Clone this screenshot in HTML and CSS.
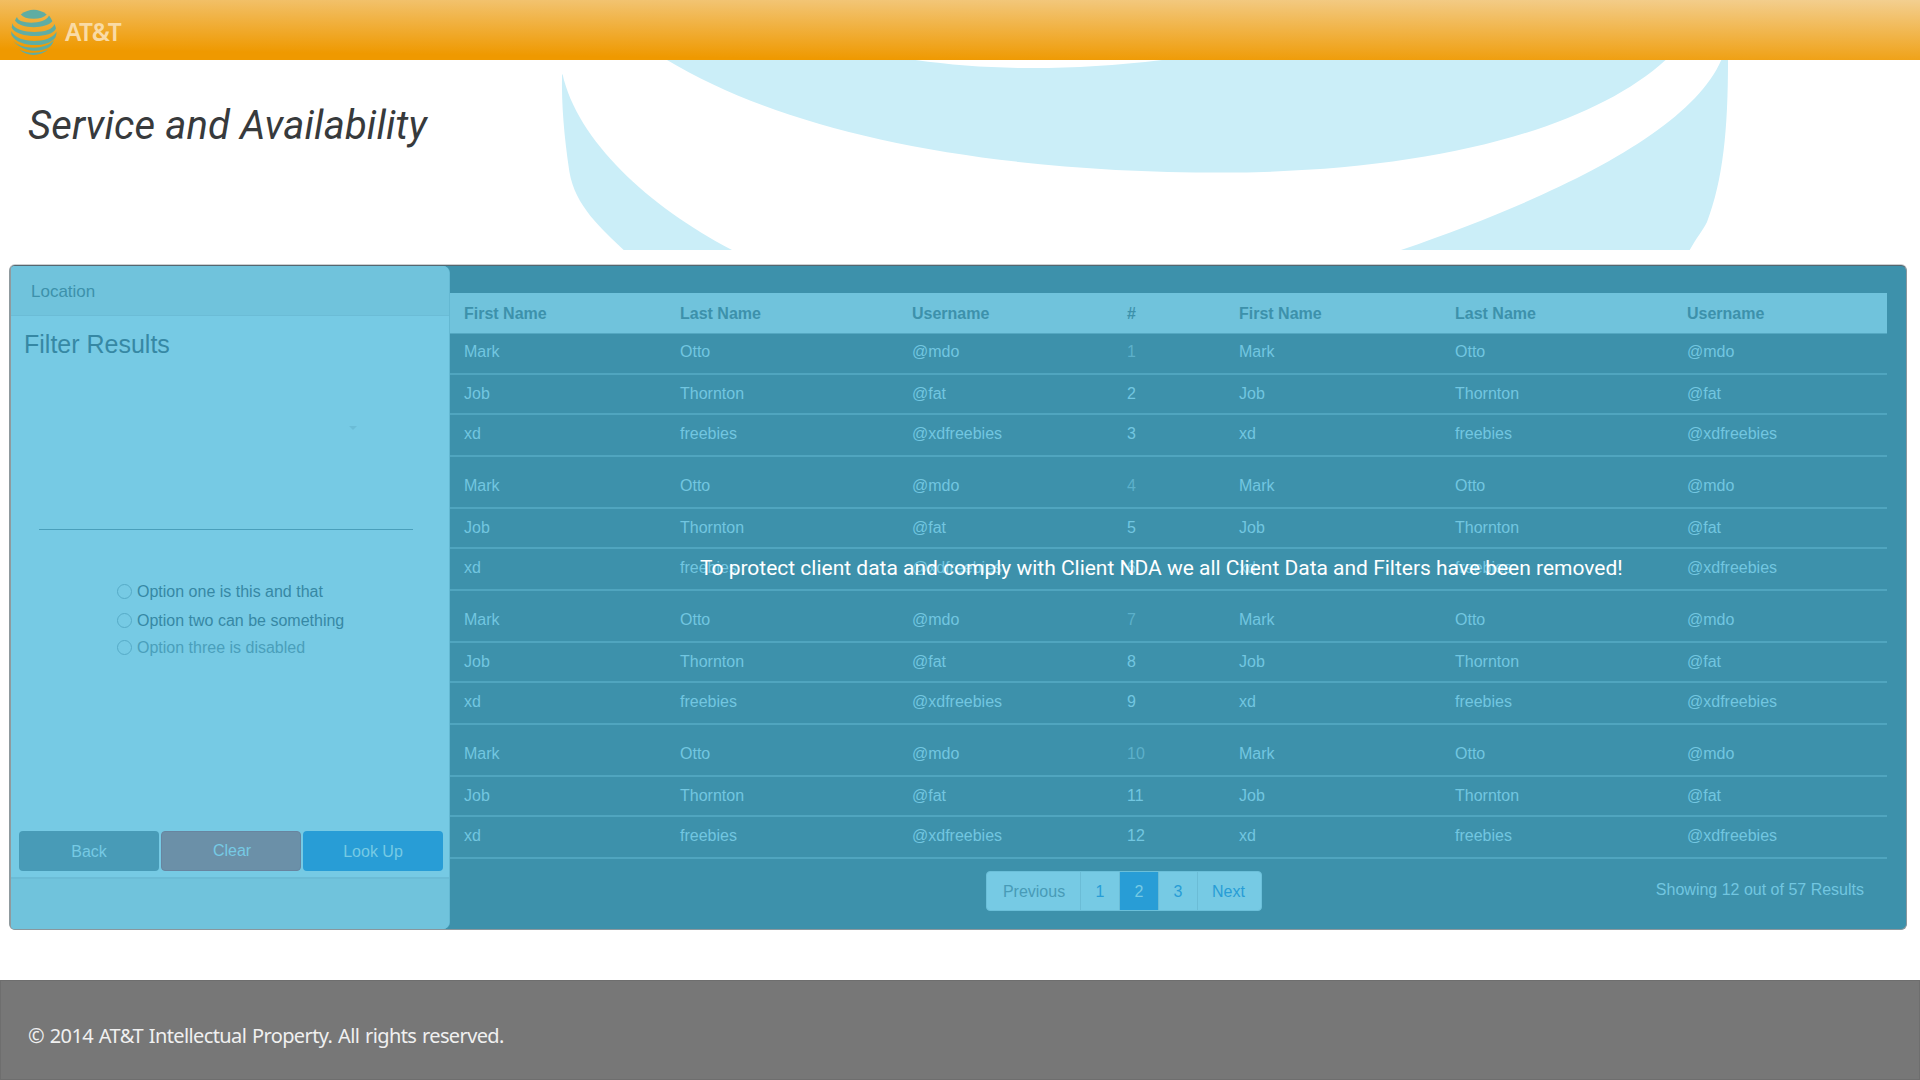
FILE: index.html
```
<!DOCTYPE html>
<html lang="en">
<head>
<meta charset="utf-8">
<title>Service and Availability</title>
<link rel="stylesheet" href="styles.css">
</head>
<body>
<header class="topbar">
  <svg class="globe" viewBox="10 9 48 48" width="48" height="48" aria-hidden="true">
    <path d="M20.8 14.5Q33.7 5.2 46.7 14.5Q43 18.7 33.6 18.7Q24 18.7 20.8 14.5Z"/>
    <path d="M17 17C18 24.5 45 25 49 15.5Q51 18 52.4 21.3C47 29 20 29.5 15 20.5Q15.7 18.5 17 17Z"/>
    <path d="M12.4 23.3C14 34 52 35.500 54.300 24Q55.500 26 56 28.500C52 39 17 38.500 11.700 27.700Z"/>
    <path d="M11.100 31C17 44 50 44.500 56.600 31.500Q56.600 34.500 55.400 37.500C48 48.500 18 47.500 11.400 35Z"/>
    <path d="M13.500 41C22 50 46 50 54 40Q52.600 44 50.500 46.300C42 53 23 53 13.500 41Z"/>
    <path d="M19.500 49.500C28 54 40 54 48.500 49.300C40 56.800 27 56.800 19.500 49.500Z"/>
  </svg>
  <span class="brand">AT&amp;T</span>
</header>

<section class="hero">
  <svg class="hero-art" viewBox="0 60 1920 190" width="1920" height="190" aria-hidden="true">
    <path d="M667 60C790 134 985 172.500 1222 172.500C1430 172.500 1590 129 1665.600 60H1162C1070 71 990 70.500 915.500 60Z"/>
    <path d="M562.500 74C577 140 648 206 732 250H623.700C602 229 575 206 569.400 171.700C564 135 561.500 105 562 75Z"/>
    <path d="M1721.300 60C1690 132 1555 197 1401 250H1689.700C1697 237 1703 230 1707 222C1723 180 1728 130 1728 60Z"/>
  </svg>
  <h1>Service and Availability</h1>
</section>

<main class="board">
  <aside class="filters">
    <div class="filters-head">Location</div>
    <div class="filters-body">
      <h2>Filter Results</h2>
      <div class="select"><span class="caret"></span></div>
      <div class="rule"></div>
      <div class="options">
        <div class="option"><span class="radio"></span>Option one is this and that</div>
        <div class="option"><span class="radio"></span>Option two can be something</div>
        <div class="option disabled"><span class="radio"></span>Option three is disabled</div>
      </div>
      <div class="buttons">
        <span class="btn back">Back</span>
        <span class="btn clear">Clear</span>
        <span class="btn lookup">Look Up</span>
      </div>
    </div>
    <div class="filters-foot"></div>
  </aside>

  <section class="results">
    <table>
      <colgroup><col class="c-first"><col class="c-last"><col class="c-user"><col class="c-num"><col class="c-first"><col class="c-last"><col></colgroup>
      <thead>
        <tr><th>First Name</th><th>Last Name</th><th>Username</th><th>#</th><th>First Name</th><th>Last Name</th><th>Username</th></tr>
      </thead>
      <tbody>
        <tr><td>Mark</td><td>Otto</td><td>@mdo</td><td>1</td><td>Mark</td><td>Otto</td><td>@mdo</td></tr>
        <tr><td>Job</td><td>Thornton</td><td>@fat</td><td>2</td><td>Job</td><td>Thornton</td><td>@fat</td></tr>
        <tr><td>xd</td><td>freebies</td><td>@xdfreebies</td><td>3</td><td>xd</td><td>freebies</td><td>@xdfreebies</td></tr>
      </tbody>
      <tbody>
        <tr><td>Mark</td><td>Otto</td><td>@mdo</td><td>4</td><td>Mark</td><td>Otto</td><td>@mdo</td></tr>
        <tr><td>Job</td><td>Thornton</td><td>@fat</td><td>5</td><td>Job</td><td>Thornton</td><td>@fat</td></tr>
        <tr><td>xd</td><td>freebies</td><td>@xdfreebies</td><td>6</td><td>xd</td><td>freebies</td><td>@xdfreebies</td></tr>
      </tbody>
      <tbody>
        <tr><td>Mark</td><td>Otto</td><td>@mdo</td><td>7</td><td>Mark</td><td>Otto</td><td>@mdo</td></tr>
        <tr><td>Job</td><td>Thornton</td><td>@fat</td><td>8</td><td>Job</td><td>Thornton</td><td>@fat</td></tr>
        <tr><td>xd</td><td>freebies</td><td>@xdfreebies</td><td>9</td><td>xd</td><td>freebies</td><td>@xdfreebies</td></tr>
      </tbody>
      <tbody>
        <tr><td>Mark</td><td>Otto</td><td>@mdo</td><td>10</td><td>Mark</td><td>Otto</td><td>@mdo</td></tr>
        <tr><td>Job</td><td>Thornton</td><td>@fat</td><td>11</td><td>Job</td><td>Thornton</td><td>@fat</td></tr>
        <tr><td>xd</td><td>freebies</td><td>@xdfreebies</td><td>12</td><td>xd</td><td>freebies</td><td>@xdfreebies</td></tr>
      </tbody>
    </table>
    <div class="results-foot">
      <nav class="pages">
        <span class="page prev">Previous</span>
        <span class="page">1</span>
        <span class="page active">2</span>
        <span class="page">3</span>
        <span class="page next">Next</span>
      </nav>
      <div class="count">Showing 12 out of 57 Results</div>
    </div>
  </section>
  <p class="notice">To protect client data and comply with Client NDA we all Client Data and Filters have been removed!</p>
</main>

<footer class="site-foot">© 2014 AT&amp;T Intellectual Property. All rights reserved.</footer>
</body>
</html>
```
FILE: styles.css
```
* { box-sizing: border-box; }

body {
  margin: 0;
  width: 1920px;
  height: 1080px;
  overflow: hidden;
  background: #fff;
  font: 16px/18px "Liberation Sans", Arial, sans-serif;
  display: flex;
  flex-direction: column;
}

.topbar {
  height: 60px;
  padding: 9px 0 0 10px;
  display: flex;
  background: linear-gradient(0.7deg, #ef9900 13%, #f3cf90 100%);
}
.globe { fill: #5fada3; flex: none; }
.brand {
  margin-left: 7px;
  font: 600 24.5px/30px "Noto Sans", "Open Sans", sans-serif;
  letter-spacing: -0.7px;
  color: #f9dba6;
  padding-top: 8px;
}

.hero { position: relative; height: 204px; padding: 41px 0 0 28px; }
.hero-art { position: absolute; left: 0; top: 0; fill: #cbeef8; }
h1 {
  position: relative;
  margin: 0;
  font: italic 400 40px/50px Roboto, sans-serif;
  letter-spacing: 0.15px;
  color: #373a3c;
}

.board {
  position: relative;
  width: 1898px;
  height: 665px;
  margin: 1px 0 0 9px;
  flex: none;
  display: flex;
  background: #3d91ab;
  border: 1px solid #8a979d;
  border-left: 2px solid #8f9a9e;
  border-top-color: #55666f;
  border-radius: 6px;
  box-shadow: 0 -1px 0 #cccfd1;
}

.filters {
  width: 439px;
  flex: none;
  display: flex;
  flex-direction: column;
  background: #76cae4;
  border-right: 1px solid #64b8d2;
  border-radius: 4px 7px 7px 4px;
  overflow: hidden;
  color: #3688a4;
}
.filters-head {
  height: 50px;
  padding: 17px 0 0 20px;
  background: #70c3dc;
  border-bottom: 1px solid #6bbcd6;
  font-size: 17px;
  color: #3d91ab;
}
.filters-body { height: 561px; padding: 13px 0 0; }
h2 { margin: 0 0 0 13px; font-size: 25px; line-height: 30px; font-weight: 400; }
.select { height: 170px; padding: 67px 0 0 338px; }
.caret {
  display: block;
  width: 8px;
  border: 4px solid transparent;
  border-top-color: #6bbcd6;
  border-bottom: 0;
}
.rule { height: 1px; margin: 0 36px 0 28px; background: #4a9fbb; }
.options { margin-top: 53px; padding-left: 106px; }
.option { display: flex; gap: 5px; height: 29px; }
.option + .option { height: 27px; }
.option.disabled { color: #4a9fbb; }
.radio { width: 15px; height: 15px; margin-top: 1px; border: 1px solid #56abc7; border-radius: 50%; }
.buttons { display: flex; gap: 2px; margin: 165px 0 0 8px; }
.btn { width: 140px; height: 40px; padding-top: 12px; text-align: center; border-radius: 4px; color: #76cae4; }
.back { background: #489bb7; }
.clear { background: #6b90a8; border: 1px solid #6885a0; padding: 10px 0 0 2px; }
.lookup { background: #289dd6; }
.filters-foot { flex: 1; background: #70c3dc; border-top: 2px solid #6bbcd6; }

.results { flex: none; width: 1437px; padding-top: 27px; color: #72c6e0; }
table { width: 1437px; table-layout: fixed; border-collapse: separate; border-spacing: 0; }
.c-first { width: 216px; }
.c-last { width: 232px; }
.c-user { width: 215px; }
.c-num { width: 112px; }
th, td { text-align: left; vertical-align: top; padding: 10px 0 0 14px; }
th { height: 41px; padding-top: 12px; background: #70c3dc; color: #3d91ab; border-bottom: 1px solid #54a8c2; }
td { height: 40px; border-bottom: 2px solid #50a5bf; }
tr:last-child td { height: 42px; }
tbody tr:first-child td { height: 52px; padding-top: 20px; }
tbody tr:first-child td:nth-child(4) { color: #5cb0ca; }
thead + tbody tr:first-child td { height: 41px; padding-top: 9px; }
thead tr:last-child th { height: 41px; }

.results-foot { display: flex; justify-content: space-between; padding: 12px 23px 0 536px; }
.pages {
  display: flex;
  height: 40px;
  background: #76cae4;
  border: 1px solid #6bbfd9;
  border-radius: 4px;
  color: #289dd6;
}
.page { width: 39px; padding-top: 11px; text-align: center; border-right: 1px solid #6bbcd6; }
.page.prev { width: 94px; padding-left: 1px; color: #489bb7; }
.page.active { background: #289dd6; color: #76cae4; }
.page.next { width: 63px; padding-right: 2px; border: 0; }
.count { padding-top: 10px; }

.notice {
  position: absolute;
  left: 689px;
  top: 290px;
  margin: 0;
  font: 400 21px/25px Roboto, sans-serif;
  letter-spacing: -0.01px;
  white-space: nowrap;
  color: #fff;
}

.site-foot {
  height: 100px;
  flex: none;
  margin-top: auto;
  padding: 41px 0 0 27px;
  background: #777;
  border: 1px solid #6e6e6e;
  color: #f0f0f0;
  font: 20px/28px "Noto Sans", "Open Sans", sans-serif;
  letter-spacing: -0.62px;
  word-spacing: 1.2px;
}
```
